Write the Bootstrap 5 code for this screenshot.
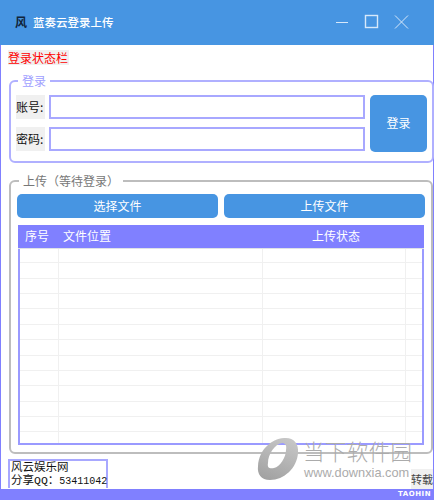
<!DOCTYPE html>
<html lang="zh-CN">
<head>
  <meta charset="UTF-8">
  <meta name="viewport" content="width=device-width, initial-scale=1.0">
  <title>蓝奏云登录上传</title>
  <link href="https://cdn.jsdelivr.net/npm/bootstrap@5.3.0/dist/css/bootstrap.min.css" rel="stylesheet">
  <style>
    html, body { height: 500px; overflow: hidden; background: #fff; }
    body { font-family: "Noto Sans CJK SC", "Liberation Sans", sans-serif; font-size: 12px; line-height: 14px; color: #111; }
    .app-window { width: 434px; height: 500px; border-left: 1px solid #8080ff; border-right: 1px solid #8080ff; }
    .title-bar { height: 45px; margin: 0 -1px; padding: 0 25px 0 15px; background: #4795e2; color: #fff; }
    .title-icon { width: 12px; margin-right: 6px; color: #10243c; font-size: 12px; font-weight: 700; }
    .title-text { font-size: 11.5px; font-weight: 500; }
    .status-line { align-self: flex-start; margin: 5px 0 0 7px; width: 61px; height: 15px; background: #f0f0f0; color: #f00; font-size: 12px; line-height: 15px; }
    .login-group, .upload-group { border: 2px solid #b0b0ff; border-radius: 6px; }
    .login-group { margin: 9px -1px 0 8px; height: 89px; padding: 0 5px; }
    .login-group legend, .upload-group legend { float: none; width: auto; margin: 0 0 0 2px; padding: 0 4px; font-size: 12px; line-height: 14px; }
    .login-group legend { color: #a0a0ff; }
    .upload-group { margin: 11px 0 0 8px; height: 281px; padding: 0 6px; border-color: #bdbdbd; }
    .upload-group legend { margin-bottom: 6px; color: #777; }
    .login-row { padding-top: 7px; }
    .field-label { width: 29px; height: 24px; margin-right: 4px; background: #f0f0f0; line-height: 24px; font-size: 12px; white-space: nowrap; }
    .field-input { width: 316px; height: 24px; padding: 0 4px; border: 2px solid #a8a8ff; border-radius: 0; }
    .login-btn { width: 57px; height: 57px; margin-left: 5px; padding: 0; border: 0; border-radius: 5px; background: #4795e2; color: #fff; font-size: 12px; }
    .pick-btn { width: 201px; height: 24px; padding: 0; border: 0; border-radius: 5px; background: #4795e2; color: #fff; font-size: 12px; line-height: 24px; }
    .file-grid { position: relative; width: 406px; height: 220px; margin: 7px 0 0 1px; overflow: hidden; }
    .file-grid::after { content: ""; position: absolute; inset: 24px 0 0 0; border: 2px solid #9a9aff; border-top: 0; pointer-events: none; }
    .file-grid table { width: 100%; table-layout: fixed; margin: 0; border-collapse: collapse; }
    .file-grid th { height: 24px; padding: 0 0 0 5px; background: #8080ff; color: #fff; font-weight: 400; font-size: 12px; vertical-align: middle; }
    .file-grid th:first-child { padding-left: 7px; }
    .file-grid td { height: 15.4px; padding: 0; border: 0; border-right: 1px solid #f0f0f0; border-bottom: 1px solid #f0f0f0; }
    .file-grid td:last-child { border-right: 0; }
    .file-grid tbody tr:first-child td { height: 14px; }
    .site-box { width: 100px; height: 29px; margin: 5px 0 0 7px; padding: 0 0 0 1px; border: 2px solid #a8a8ff; border-bottom: 0; white-space: nowrap; font-family: "Liberation Mono", "Noto Sans CJK SC", monospace; font-size: 11.5px; }
    .site-line { height: 13px; line-height: 13px; }
    .qq-num { font-size: 10px; }
    .repost-tag { width: 22px; height: 20px; margin-top: 15px; background: #f0f0f0; color: #444; font-size: 11px; line-height: 20px; white-space: nowrap; }
    .foot-bar { height: 11px; margin: 0 -1px; padding-right: 3px; background: #8080ff; color: #fff; font-family: "DejaVu Sans", sans-serif; font-size: 7px; font-weight: 700; letter-spacing: .5px; line-height: 11px; }
    .mark-wrap { position: absolute; left: 256px; top: 437px; width: 160px; height: 44px; color: #ababab; pointer-events: none; }
    .mark-logo { position: absolute; left: 0; top: 0; }
    .mark-name { position: absolute; left: 46px; top: 2px; font-size: 21.5px; line-height: 24px; letter-spacing: .4px; white-space: nowrap; font-weight: 300; }
    .mark-url { position: absolute; left: 47px; top: 28px; font-family: "Liberation Sans", sans-serif; font-size: 12.8px; line-height: 16px; white-space: nowrap; }
  </style>
</head>
<body>
  <div class="app-window d-flex flex-column position-relative">
    <div class="title-bar d-flex align-items-center">
      <span class="title-icon">风</span>
      <span class="title-text flex-grow-1">蓝奏云登录上传</span>
      <svg width="74" height="16" viewBox="0 0 74 16" fill="none" stroke="#d7e8fa">
        <path d="M1 8.5H13"/>
        <rect x="30.5" y="1.5" width="12" height="12" stroke-width="1.4"/>
        <path d="M60 1.5L73 14.5M73 1.5L60 14.5"/>
      </svg>
    </div>

    <div class="status-line">登录状态栏</div>

    <fieldset class="login-group">
      <legend>登录</legend>
      <div class="login-row d-flex align-items-center">
        <div class="d-flex flex-column gap-2">
          <div class="d-flex">
            <label class="field-label">账号:</label>
            <input type="text" class="form-control field-input">
          </div>
          <div class="d-flex">
            <label class="field-label">密码:</label>
            <input type="password" class="form-control field-input">
          </div>
        </div>
        <button type="button" class="btn login-btn">登录</button>
      </div>
    </fieldset>

    <fieldset class="upload-group">
      <legend>上传（等待登录）</legend>
      <div class="d-flex justify-content-between">
        <button type="button" class="btn pick-btn">选择文件</button>
        <button type="button" class="btn pick-btn">上传文件</button>
      </div>
      <div class="file-grid">
        <table class="table">
          <colgroup>
            <col style="width:40px"><col style="width:204px"><col style="width:143px"><col>
          </colgroup>
          <thead>
            <tr><th>序号</th><th>文件位置</th><th class="text-center">上传状态</th><th></th></tr>
          </thead>
          <tbody id="rows"></tbody>
        </table>
      </div>
    </fieldset>

    <div class="d-flex justify-content-between flex-grow-1">
      <div class="site-box">
        <div class="site-line">风云娱乐网</div>
        <div class="site-line">分享QQ：<span class="qq-num">53411042</span></div>
      </div>
      <div class="repost-tag">转载</div>
    </div>

    <div class="foot-bar text-end">TAOHIN</div>

    <div class="mark-wrap">
      <svg class="mark-logo" width="42" height="44" viewBox="0 0 42 44">
        <defs>
          <linearGradient id="markFade" x1="0.7" y1="0" x2="0.3" y2="1">
            <stop offset="0" stop-color="#c6c6c6"/>
            <stop offset="1" stop-color="#a2a2a2"/>
          </linearGradient>
        </defs>
        <path fill="url(#markFade)" fill-rule="evenodd" d="M27 1C36 0 42 6 41 16C40 31 27 43 13 43C4 43 0 37 1 29C2 13 14 2 27 1ZM25 6C18 7 11 17 11 26C10 31 13 32 17 31C23 30 29 20 29 13C30 8 28 6 25 6Z"/>
      </svg>
      <div class="mark-name">当下软件园</div>
      <div class="mark-url">www.downxia.com</div>
    </div>
  </div>

  <script src="https://cdn.jsdelivr.net/npm/bootstrap@5.3.0/dist/js/bootstrap.bundle.min.js"></script>
  <script>
    // empty grid rows
    var rowsHtml = '';
    for (var i = 0; i < 13; i++) {
      rowsHtml += '<tr><td></td><td></td><td></td><td></td></tr>';
    }
    document.getElementById('rows').innerHTML = rowsHtml;
  </script>
</body>
</html>
